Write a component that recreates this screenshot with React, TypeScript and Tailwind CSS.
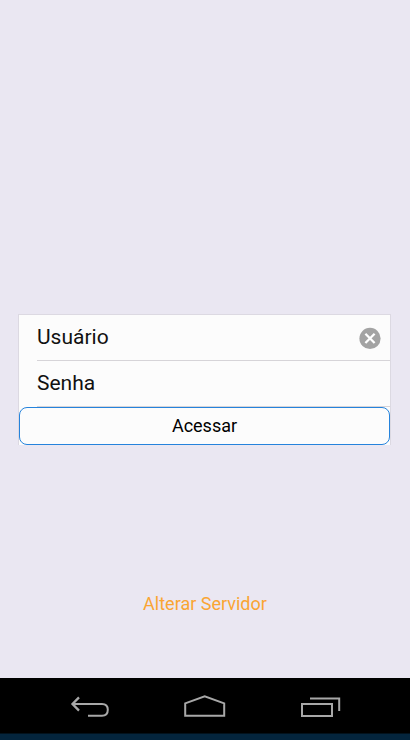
import { useState } from "react";

interface FieldProps {
  name: string;
  label: string;
  type?: string;
  clearable?: boolean;
}

function Field({ name, label, type = "text", clearable }: FieldProps) {
  const [value, setValue] = useState("");

  return (
    <div className="ml-[18px] flex h-[46px] items-center border-b border-[#d6d4d8] pr-[9px]">
      <input
        name={name}
        type={type}
        value={value}
        placeholder={label}
        aria-label={label}
        onChange={(e) => setValue(e.target.value)}
        className="h-full min-w-0 flex-1 bg-transparent pb-px text-[21px] text-black outline-none placeholder:text-[#111111]"
      />
      {clearable && (
        <button type="button" aria-label={`Limpar ${label}`} onClick={() => setValue("")}>
          <svg viewBox="0 0 22 22" className="size-[22px]">
            <circle cx="11" cy="11.4" r="10.6" fill="#a3a3a3" />
            <path d="M6.4 6.8 15.6 16M15.6 6.8 6.4 16" stroke="#fff" strokeWidth="2.3" />
          </svg>
        </button>
      )}
    </div>
  );
}

function NavBar() {
  return (
    <nav className="flex h-14 items-center justify-center gap-[72px] border-b border-[#02121d] bg-black pt-px">
      <button type="button" aria-label="Voltar">
        <svg viewBox="0 0 44 24" className="h-6 w-11" fill="none" stroke="#a8a8a8" strokeWidth="2">
          <path d="M12 3.4 5.5 10 12 16.6" strokeWidth="2.3" />
          <path d="M5.5 10H35C39.3 10 40.8 12.7 40.8 15.8C40.8 19.2 39.3 21.8 35 21.8H21" />
        </svg>
      </button>
      <button type="button" aria-label="Início">
        <svg viewBox="0 0 44 24" className="h-6 w-11" fill="none" stroke="#a8a8a8" strokeWidth="2">
          <path d="M2.2 9.4 21.7 2.2 41.2 9.4V21.8H2.2Z" />
        </svg>
      </button>
      <button type="button" aria-label="Recentes">
        <svg viewBox="0 0 44 24" className="h-6 w-11" fill="none" stroke="#a8a8a8" strokeWidth="2">
          <path d="M3 10H33V22H3Z" />
          <path d="M11 4.5H40.2V17" />
        </svg>
      </button>
    </nav>
  );
}

export default function App() {
  return (
    <div className="flex min-h-screen flex-col bg-[#eae7f2] font-['Roboto',sans-serif]">
      <main className="flex flex-1 flex-col pt-[314px]">
        <form
          className="mr-[19px] ml-[18px] border border-b-0 border-[#dcd9e2] bg-[#fcfcfc]"
          onSubmit={(e) => e.preventDefault()}
        >
          <Field name="usuario" label="Usuário" clearable />
          <Field name="senha" label="Senha" type="password" />
          <button
            type="submit"
            className="block h-[38px] w-full rounded-lg border border-[#2583dc] text-lg text-black"
          >
            Acessar
          </button>
        </form>
        <a href="#servidor" className="mt-[145px] self-center text-lg text-[#faa532]">
          Alterar Servidor
        </a>
      </main>
      <NavBar />
      <div className="h-[6px] bg-[#04253d]"></div>
    </div>
  );
}
